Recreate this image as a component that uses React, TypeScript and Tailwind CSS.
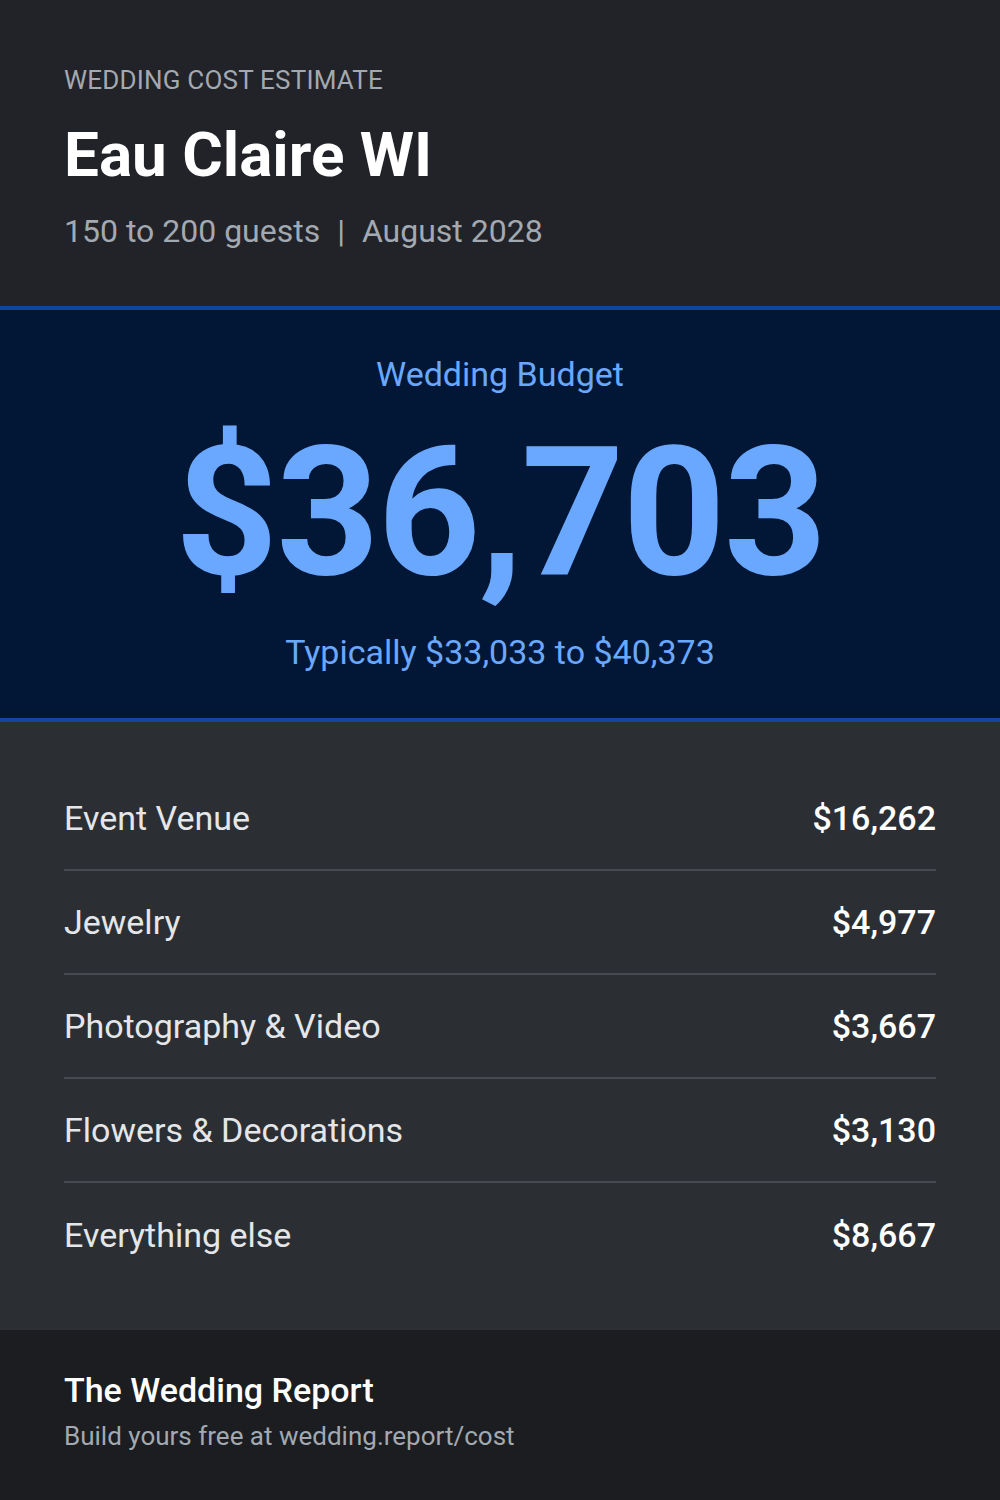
const rows = [
  { label: "Event Venue", amount: "$16,262" },
  { label: "Jewelry", amount: "$4,977" },
  { label: "Photography & Video", amount: "$3,667" },
  { label: "Flowers & Decorations", amount: "$3,130" },
  { label: "Everything else", amount: "$8,667" },
];

export default function App() {
  return (
    <div className="w-[1000px] h-[1500px] flex flex-col bg-[#212328] font-['Roboto',sans-serif]">
      <header className="h-[306px] px-16 pt-[62px]">
        <p className="text-[26px] leading-[36px] tracking-[0.2px] text-[#a3a9b1]">
          WEDDING COST ESTIMATE
        </p>
        <h1 className="mt-[19px] text-[62px] leading-[76px] font-bold text-white">
          Eau Claire WI
        </h1>
        <p className="mt-[18px] text-[32px] leading-[40px] text-[#a3a9b1]">
          150 to 200 guests <span className="mx-[9px]">|</span> August 2028
        </p>
      </header>

      <section className="h-[416px] border-y-4 border-[#0d47a1] bg-[#021735] flex flex-col items-center text-[#6aa8ff]">
        <p className="mt-[44px] text-[34px] leading-[40px]">Wedding Budget</p>
        <p className="mt-[19px] text-[180px] leading-[200px] font-bold tracking-[-2px]">$36,703</p>
        <p className="mt-[19px] text-[34px] leading-[40px]">Typically $33,033 to $40,373</p>
      </section>

      <section className="h-[608px] bg-[#2b2f33] px-16 pt-[45px]">
        {rows.map((r, i) => (
          <div
            key={r.label}
            className={`h-[104px] flex items-center justify-between ${i < rows.length - 1 ? "border-b-2 border-[#464a50]" : ""}`}
          >
            <span className="text-[34px] text-[#e4e6ea]">{r.label}</span>
            <span className="text-[34px] font-medium text-white">{r.amount}</span>
          </div>
        ))}
      </section>

      <footer className="flex-1 bg-[#1b1d20] px-16 pt-[40px]">
        <p className="text-[34px] leading-[40px] font-medium text-white">The Wedding Report</p>
        <p className="mt-[8px] text-[26px] leading-[36px] text-[#a3a9b1]">
          Build yours free at wedding.report/cost
        </p>
      </footer>
    </div>
  );
}
